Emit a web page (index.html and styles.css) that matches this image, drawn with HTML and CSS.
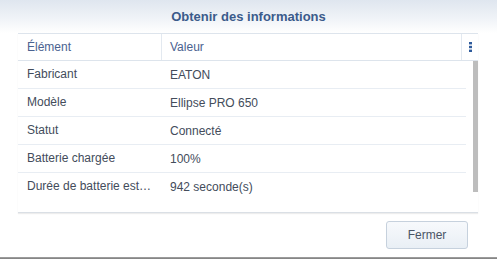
FILE: index.html
```html
<!DOCTYPE html>
<html lang="fr">
<head>
  <meta charset="UTF-8" />
  <meta name="viewport" content="width=device-width, initial-scale=1.0" />
  <title>Obtenir des informations</title>
  <link rel="stylesheet" href="styles.css">
</head>
<body>
  <div class="dialog">
    <div class="title">Obtenir des informations</div>

    <div class="grid">
      <div class="grid-head">
        <div class="cell col-name">Élément</div>
        <div class="cell col-value">Valeur</div>
        <div class="col-menu">
          <svg width="3" height="10" viewBox="0 0 3 10">
            <rect x="0" y="0" width="3" height="2.4" fill="#2f5b9c" />
            <rect x="0" y="3.8" width="3" height="2.4" fill="#2f5b9c" />
            <rect x="0" y="7.6" width="3" height="2.4" fill="#2f5b9c" />
          </svg>
        </div>
      </div>

      <div class="grid-body">
        <div class="rows">
          <div class="row"><div class="cell col-name">Fabricant</div><div class="cell col-value">EATON</div></div>
          <div class="row"><div class="cell col-name">Modèle</div><div class="cell col-value">Ellipse PRO 650</div></div>
          <div class="row"><div class="cell col-name">Statut</div><div class="cell col-value">Connecté</div></div>
          <div class="row"><div class="cell col-name">Batterie chargée</div><div class="cell col-value">100%</div></div>
          <div class="row last"><div class="cell col-name">Durée de batterie estimée</div><div class="cell col-value">942 seconde(s)</div></div>
        </div>
        <div class="scroll-track"><div class="scroll-thumb"></div></div>
      </div>
    </div>

    <div class="footer">
      <button type="button" class="btn">Fermer</button>
    </div>
    <div class="bottom-bar"></div>
  </div>
</body>
</html>
```

FILE: styles.css
```css
html, body {
  margin: 0;
  padding: 0;
  background-color: #fff;
}
body {
  font-family: "Liberation Sans", Arial, sans-serif;
  font-size: 12px;
  color: #434c5b;
}
.dialog {
  width: 497px;
  height: 259px;
  display: flex;
  flex-direction: column;
  overflow: hidden;
}
.title {
  height: 33px;
  line-height: 33px;
  text-align: center;
  font-size: 13px;
  font-weight: bold;
  color: #3b5b8b;
  background: linear-gradient(to bottom, #dfe6ef 0%, #f1f4f8 60%, #fff 100%);
}
.grid {
  margin: 0 19px 0 18px;
  height: 179px;
  display: flex;
  flex-direction: column;
  border-bottom: 1px solid #dadfe5;
  box-shadow: 0 1px 1px rgba(0, 0, 0, 0.07);
}
.grid-head {
  display: flex;
  height: 26px;
  border-top: 1px solid #dde4ec;
  border-bottom: 1px solid #dde4ec;
  color: #4a6290;
}
.cell {
  display: flex;
  align-items: center;
  box-sizing: border-box;
  white-space: nowrap;
  overflow: hidden;
}
.col-name {
  width: 144px;
  padding: 0 9px 0 9px;
}
.row .col-name {
  display: block;
  text-overflow: ellipsis;
  line-height: 27px;
}
.grid-head .col-name {
  border-right: 1px solid #e3e9f0;
}
.col-value {
  padding-left: 8px;
}
.grid-head .col-value {
  width: 300px;
  border-right: 1px solid #e3e9f0;
}
.col-menu {
  flex: 1;
  display: flex;
  align-items: center;
  justify-content: center;
  padding-left: 1px;
}
.grid-body {
  flex: 1;
  display: flex;
  min-height: 0;
}
.rows {
  width: 448px;
}
.row {
  display: flex;
  height: 27px;
  border-bottom: 1px solid #e8edf3;
}
.row.last {
  border-bottom: none;
}
.row .col-value {
  flex: 1;
}
.scroll-track {
  margin-left: 7px;
  width: 5px;
}
.scroll-thumb {
  width: 5px;
  height: 131px;
  background-color: #bdbdbd;
}
.footer {
  flex: 1;
  display: flex;
  justify-content: flex-end;
  align-items: flex-start;
  padding: 8px 29px 0 0;
}
.btn {
  width: 82px;
  height: 28px;
  font-family: inherit;
  font-size: 12px;
  color: #4b5566;
  background: linear-gradient(to bottom, #f7f9fc, #e9eff5);
  border: 1px solid #c6d1dd;
  border-radius: 3px;
  cursor: pointer;
}
.bottom-bar {
  height: 2px;
  background: linear-gradient(to bottom, #a6a6a6, #7b7b7b);
}
```
